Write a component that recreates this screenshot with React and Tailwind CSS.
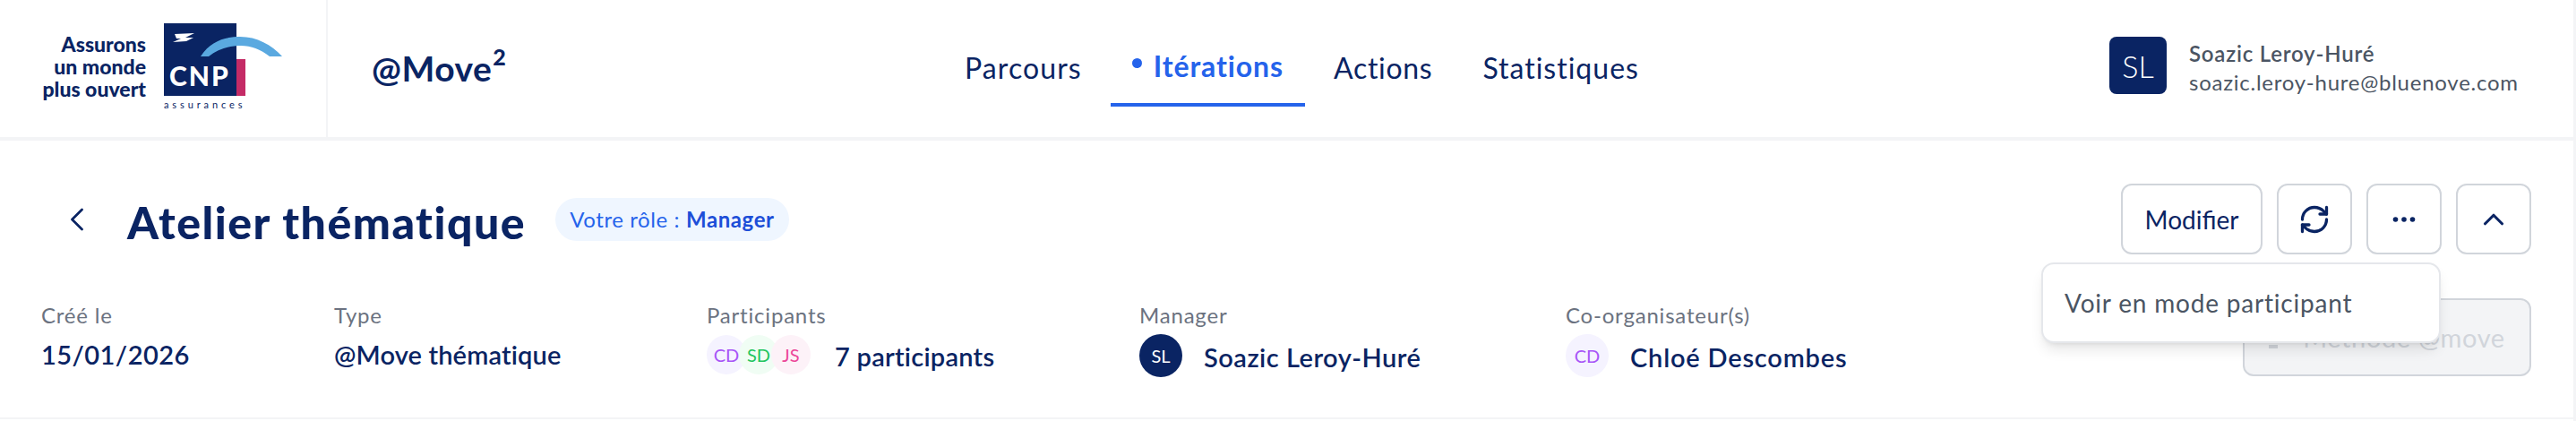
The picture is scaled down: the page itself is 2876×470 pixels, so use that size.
import React from 'react';
import { ChevronLeft, ChevronUp, RefreshCw } from 'lucide-react';

const NAV = [
  { label: 'Parcours', cls: 'tracking-[1.1px]' },
  { label: 'Itérations', cls: 'tracking-[0.9px]', active: true },
  { label: 'Actions', cls: 'tracking-[0.7px]' },
  { label: 'Statistiques', cls: 'tracking-[1px]' },
];

const CnpLogo = () => (
  <svg width="136" height="100" viewBox="0 0 136 100" className="shrink-0">
    <rect x="0" y="0" width="81" height="81" fill="#0a2463" />
    <rect x="81" y="40" width="10" height="41" fill="#c42b66" />
    <path d="M41 37 C52 20 68 15 85 15 C104 15 120 24 132 37 L118 37 C108 29 97 25 86 25 C72 25 60 29 50 37 Z" fill="#5aa9e0" />
    <path d="M12 12 L34 11 L24 16 L33 16 L25 20 L10 21 L19 17 L14 17 Z" fill="#ffffff" />
    <text x="6" y="70" fill="#ffffff" fontSize="30" fontWeight="900" letterSpacing="2" fontFamily="Lato, sans-serif">CNP</text>
    <text x="0" y="95" fill="#0a2463" fontSize="11" letterSpacing="3.9" fontFamily="Lato, sans-serif">assurances</text>
  </svg>
);

const Label = ({ children }) => (
  <div className="text-[24px] leading-[36px] text-[#6b7280] tracking-[0.8px]">{children}</div>
);

const Value = ({ children, cls }) => (
  <div className={`text-[29px] leading-[40px] font-semibold text-[#0a2463] whitespace-nowrap ${cls || ''}`}>{children}</div>
);

const Initials = ({ text, cls, size = 'w-12 h-12 text-[20px]' }) => (
  <div className={`rounded-full flex items-center justify-center shrink-0 ${size} ${cls}`}>{text}</div>
);

const Dots = () => (
  <svg width="28" height="8" viewBox="0 0 28 8" fill="#0a2463">
    <circle cx="4.5" cy="4" r="2.8" />
    <circle cx="14" cy="4" r="2.8" />
    <circle cx="23.5" cy="4" r="2.8" />
  </svg>
);

export default function App() {
  return (
    <div className="w-[2876px] h-[470px] overflow-hidden bg-white border-r-[3px] border-[#f3f4f6] font-['Lato',sans-serif]">
      <header className="h-[157px] flex border-b-4 border-[#f3f4f6]">
        <div className="w-[366px] shrink-0 flex items-start pt-[26px] pl-[44px] border-r-2 border-[#f3f4f6]">
          <div className="w-[119px] text-right text-[23px] leading-[25px] font-black text-[#0a2463] pt-[11px] whitespace-nowrap">
            Assurons<br />un monde<br />plus ouvert
          </div>
          <div className="ml-[20px]"><CnpLogo /></div>
        </div>
        <div className="w-[321px] shrink-0 pl-[49px] flex items-center text-[#0a2463] font-bold text-[39px] tracking-[0.5px]">
          @Move<sup className="text-[25px] font-black -top-[14px] ml-[1px]">2</sup>
        </div>
        <nav className="flex gap-2 h-[119px] ml-[366px]">
          {NAV.map(item => (
            <div
              key={item.label}
              className={`px-6 flex items-center text-[32px] h-full pt-[36px] border-b-4 ${item.active ? 'border-[#2563eb] text-[#2563eb] font-bold' : 'border-transparent text-[#0a2463]'} ${item.cls}`}
            >
              {item.active && <span className="w-[11px] h-[11px] rounded-full bg-[#2563eb] mr-[13px] mb-[10px]" />}
              <span className={item.active ? 'mb-[4px]' : ''}>{item.label}</span>
            </div>
          ))}
        </nav>
        <div className="ml-auto w-[518px] shrink-0 flex items-start pt-[41px]">
          <div className="w-16 h-16 rounded-lg bg-[#0a2463] text-white text-[34px] font-light flex items-center justify-center">SL</div>
          <div className="ml-[25px] text-[#4b5563] text-[24px] leading-[32px] pt-[3px] whitespace-nowrap">
            <div className="font-semibold tracking-[0.8px]">Soazic Leroy-Huré</div>
            <div className="tracking-[0.75px]">soazic.leroy-hure@bluenove.com</div>
          </div>
        </div>
      </header>

      <section className="relative h-[311px] pl-[46px] pr-[47px] pt-12 border-b-2 border-[#f3f4f6]">
        <div className="flex items-center h-[79px]">
          <button className="w-[96px] h-12 flex items-center text-[#0a2463] pl-[18px]">
            <ChevronLeft size={44} strokeWidth={1.5} />
          </button>
          <h1 className="text-[50px] leading-[56px] font-black text-[#0a2463] tracking-[1.5px] mt-[6px]">Atelier thématique</h1>
          <div className="ml-[33px] h-12 px-4 rounded-full bg-[#eff6ff] flex items-center text-[24px] text-[#2563eb] tracking-[0.6px]">
            Votre rôle :&nbsp;<span className="font-bold text-[#1d4ed8]">Manager</span>
          </div>
          <div className="ml-auto flex gap-4">
            <button className="w-[158px] h-[79px] rounded-xl border-2 border-[#d1d5db] text-[#0a2463] text-[28px]">Modifier</button>
            <button className="w-[84px] h-[79px] rounded-xl border-2 border-[#d1d5db] text-[#0a2463] flex items-center justify-center"><RefreshCw size={36} strokeWidth={2.2} /></button>
            <button className="w-[84px] h-[79px] rounded-xl border-2 border-[#d1d5db] flex items-center justify-center"><Dots /></button>
            <button className="w-[84px] h-[79px] rounded-xl border-2 border-[#d1d5db] text-[#0a2463] flex items-center justify-center"><ChevronUp size={38} strokeWidth={2} /></button>
          </div>
        </div>

        <div className="mt-[50px] flex items-start">
          <div className="w-[327px] shrink-0">
            <Label>Créé le</Label>
            <Value cls="mt-[6px] tracking-[0.45px]">15/01/2026</Value>
          </div>
          <div className="w-[416px] shrink-0">
            <Label>Type</Label>
            <Value cls="mt-[6px] tracking-[0.15px]">@Move thématique</Value>
          </div>
          <div className="w-[483px] shrink-0">
            <Label>Participants</Label>
            <div className="flex items-center mt-[3px]">
              <Initials text="CD" size="w-11 h-11 text-[20px]" cls="bg-[#f5f3ff] text-[#a855f7]" />
              <Initials text="SD" size="w-11 h-11 text-[20px]" cls="-ml-2 bg-[#f0fdf4] text-[#22c55e]" />
              <Initials text="JS" size="w-11 h-11 text-[20px]" cls="-ml-2 bg-[#fdf2f8] text-[#ec4899]" />
              <Value cls="ml-[27px] mt-[5px] tracking-[0.25px]">7 participants</Value>
            </div>
          </div>
          <div className="w-[476px] shrink-0">
            <Label>Manager</Label>
            <div className="flex items-center mt-[3px]">
              <Initials text="SL" cls="bg-[#0a2463] text-white" />
              <Value cls="ml-6 mt-[4px] tracking-[0.5px]">Soazic Leroy-Huré</Value>
            </div>
          </div>
          <div>
            <Label>Co-organisateur(s)</Label>
            <div className="flex items-center mt-[3px]">
              <Initials text="CD" cls="bg-[#f5f3ff] text-[#a855f7]" />
              <Value cls="ml-6 mt-[4px] tracking-[0.8px]">Chloé Descombes</Value>
            </div>
          </div>
          <button className="ml-auto w-[322px] h-[87px] -mt-px rounded-xl border-2 border-[#d1d5db] bg-[#f3f4f6] text-[#d1d5db] text-[29px] tracking-[0.6px] flex items-center justify-center gap-7 shrink-0">
            <span className="flex flex-col gap-[3px] mt-[14px]">
              <span className="w-[10px] h-[3px] bg-[#d1d5db]" />
              <span className="w-[10px] h-[4px] bg-[#d1d5db]" />
            </span>
            Méthode @move
          </button>
        </div>

        <div className="absolute left-[2279px] top-[136px] w-[446px] h-[90px] rounded-[14px] bg-white border-2 border-[#e5e7eb] shadow-lg flex items-center pl-[24px] text-[28px] text-[#4b5563] tracking-[0.8px]">
          Voir en mode participant
        </div>
      </section>
    </div>
  );
}
